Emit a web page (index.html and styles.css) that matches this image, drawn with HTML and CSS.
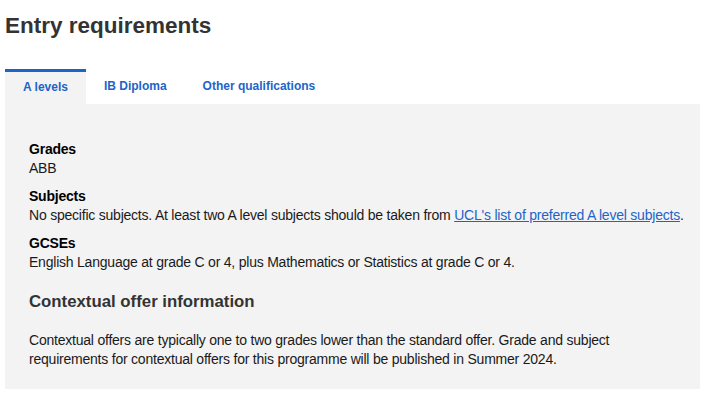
FILE: index.html
```html
<!DOCTYPE html>
<html lang="en">
<head>
<meta charset="utf-8">
<title>Entry requirements</title>
<link rel="stylesheet" href="styles.css">
</head>
<body>
<main class="entry">
  <h2 class="entry__title">Entry requirements</h2>
  <div class="tabs">
    <ul class="tabs__list" role="tablist">
      <li class="tabs__item tabs__item--active" role="tab">A levels</li>
      <li class="tabs__item" role="tab">IB Diploma</li>
      <li class="tabs__item" role="tab">Other qualifications</li>
    </ul>
    <section class="tabs__panel" role="tabpanel">
      <dl class="reqs">
        <dt class="reqs__label">Grades</dt>
        <dd class="reqs__value">ABB</dd>
        <dt class="reqs__label">Subjects</dt>
        <dd class="reqs__value">No specific subjects. At least two A level subjects should be taken from <a class="reqs__link" href="#">UCL's list of preferred A level subjects</a>.</dd>
        <dt class="reqs__label">GCSEs</dt>
        <dd class="reqs__value">English Language at grade C or 4, plus Mathematics or Statistics at grade C or 4.</dd>
      </dl>
      <h3 class="context__title">Contextual offer information</h3>
      <p class="context__text">Contextual offers are typically one to two grades lower than the standard offer. Grade and subject requirements for contextual offers for this programme will be published in Summer 2024.</p>
    </section>
  </div>
</main>
</body>
</html>
```
FILE: styles.css
```css
html, body {
  margin: 0;
  padding: 0;
  background: #ffffff;
}

body {
  font-family: "Liberation Sans", Arial, sans-serif;
  color: #1a1a1a;
}

.entry {
  padding: 12px 8px 0 5px;
}

.entry__title {
  margin: 0;
  font-size: 22.5px;
  line-height: 28px;
  font-weight: 700;
  color: #333333;
}

.tabs {
  margin-top: 29px;
}

.tabs__list {
  display: flex;
  align-items: flex-end;
  margin: 0;
  padding: 0;
  list-style: none;
}

.tabs__item {
  padding: 7px 18px 11px;
  border-top: 3px solid transparent;
  font-size: 12px;
  line-height: 14px;
  font-weight: 700;
  color: #1e64c8;
  cursor: pointer;
}

.tabs__item--active {
  padding-top: 8px;
  padding-bottom: 10px;
  border-top-color: #1e64c8;
  background: #f3f3f3;
}

.tabs__panel {
  background: #f3f3f3;
  padding: 36px 12px 20px 24px;
}

.reqs {
  margin: 0;
  font-size: 14px;
  line-height: 19px;
  letter-spacing: -0.22px;
}

.reqs__label {
  font-weight: 700;
  color: #000000;
}

.reqs__value {
  margin: 0 0 9px 0;
  color: #1a1a1a;
}

.reqs__link {
  color: #1e64c8;
  text-decoration: underline;
}

.context__title {
  margin: 19px 0 0 0;
  font-size: 16.8px;
  line-height: 22px;
  font-weight: 700;
  color: #333333;
}

.context__text {
  margin: 18px 0 0 0;
  font-size: 14px;
  line-height: 19px;
  letter-spacing: -0.22px;
  color: #1a1a1a;
}
```
